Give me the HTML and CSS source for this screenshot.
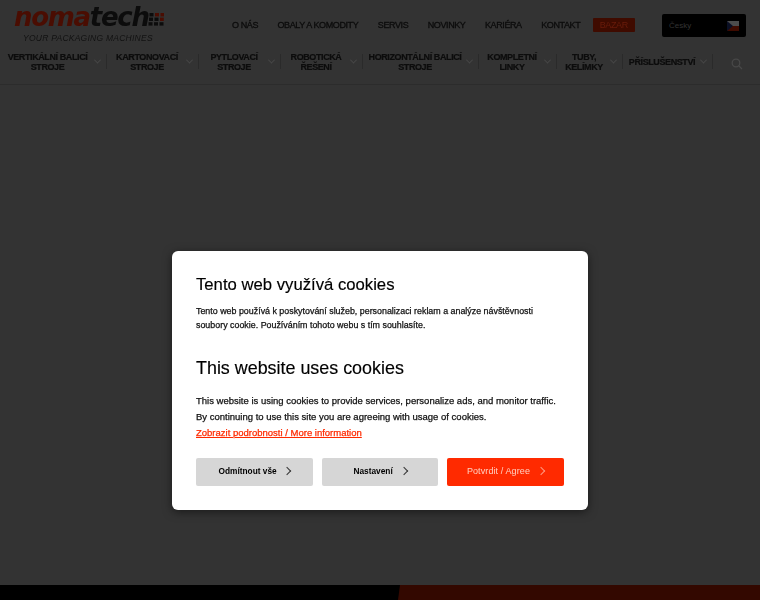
FILE: index.html
```html
<!DOCTYPE html>
<html lang="cs">
<head>
    <meta charset="UTF-8">
    <meta name="viewport" content="width=device-width, initial-scale=1.0">
    <title>Nomatech</title>
    <link rel="stylesheet" href="styles.css">
</head>
<body>
    <div class="page">
        <header class="site-header">
            <div class="top-row">
                <a class="logo" href="#">
                    <span class="logo-name">
                        <span class="logo-red">noma</span>tech
                        <svg class="logo-mark" width="16" height="13" viewBox="0 0 16 13">
                            <g fill="#0c0c0c">
                                <rect x="1.5" y="0" width="4" height="3.4"/>
                                <rect x="1" y="4.6" width="4" height="3.4"/>
                                <rect x="0.5" y="9.2" width="4" height="3.4"/>
                                <rect x="6.5" y="4.6" width="4" height="3.4"/>
                                <rect x="6" y="9.2" width="4" height="3.4"/>
                                <rect x="11.5" y="9.2" width="4" height="3.4"/>
                            </g>
                            <g fill="#4a0d02">
                                <rect x="7" y="0" width="4" height="3.4"/>
                                <rect x="12.5" y="0" width="3.5" height="3.4"/>
                                <rect x="12" y="4.6" width="3.8" height="3.4"/>
                            </g>
                        </svg>
                    </span>
                    <span class="logo-tag">YOUR PACKAGING MACHINES</span>
                </a>
                <nav class="top-nav">
                    <a href="#">O NÁS</a>
                    <a href="#">OBALY A KOMODITY</a>
                    <a href="#">SERVIS</a>
                    <a href="#">NOVINKY</a>
                    <a href="#">KARIÉRA</a>
                    <a href="#">KONTAKT</a>
                    <a class="bazar" href="#">BAZAR</a>
                </nav>
                <div class="lang">
                    <span>Česky</span>
                    <svg width="12" height="10" viewBox="0 0 12 10">
                        <rect width="12" height="5" fill="#4c4c4c"/>
                        <rect y="5" width="12" height="5" fill="#3f0b00"/>
                        <path d="M0 0 L6 5 L0 10 Z" fill="#0a0f24"/>
                    </svg>
                </div>
            </div>
            <nav class="main-nav">
                <a class="nav-item" href="#"><span>VERTIKÁLNÍ BALICÍ<br>STROJE</span><i class="chev"></i></a>
                <a class="nav-item" href="#"><span>KARTONOVACÍ<br>STROJE</span><i class="chev"></i></a>
                <a class="nav-item" href="#"><span>PYTLOVACÍ<br>STROJE</span><i class="chev"></i></a>
                <a class="nav-item" href="#"><span>ROBOTICKÁ<br>ŘEŠENÍ</span><i class="chev"></i></a>
                <a class="nav-item" href="#"><span>HORIZONTÁLNÍ BALICÍ<br>STROJE</span><i class="chev"></i></a>
                <a class="nav-item" href="#"><span>KOMPLETNÍ<br>LINKY</span><i class="chev"></i></a>
                <a class="nav-item" href="#"><span>TUBY,<br>KELÍMKY</span><i class="chev"></i></a>
                <a class="nav-item" href="#"><span>PŘÍSLUŠENSTVÍ</span><i class="chev"></i></a>
                <a class="nav-search" href="#">
                    <svg width="12" height="12" viewBox="0 0 12 12" fill="none" stroke="#484848" stroke-width="1.3">
                        <circle cx="5" cy="5" r="3.8"/>
                        <path d="M8 8 L11 11"/>
                    </svg>
                </a>
            </nav>
        </header>
        <main class="content"></main>
        <footer class="site-footer">
            <div class="footer-right"></div>
        </footer>
    </div>

    <div class="overlay">
        <div class="cookie-box">
            <h2>Tento web využívá cookies</h2>
            <p class="cookie-small">Tento web používá k poskytování služeb, personalizaci reklam a analýze návštěvnosti soubory cookie. Používáním tohoto webu s tím souhlasíte.</p>
            <h2 class="second">This website uses cookies</h2>
            <p class="cookie-text">This website is using cookies to provide services, personalize ads, and monitor traffic. By continuing to use this site you are agreeing with usage of cookies.</p>
            <a class="cookie-link" href="#">Zobrazit podrobnosti / More information</a>
            <div class="cookie-buttons">
                <button class="btn">Odmítnout vše <i class="btn-chev"></i></button>
                <button class="btn">Nastavení <i class="btn-chev"></i></button>
                <button class="btn btn-agree">Potvrdit / Agree <i class="btn-chev"></i></button>
            </div>
        </div>
    </div>
</body>
</html>
```

FILE: styles.css
```css
* {
    box-sizing: border-box;
    margin: 0;
    padding: 0;
}

html, body {
    height: 100%;
    overflow: hidden;
}

body {
    font-family: "Liberation Sans", Arial, sans-serif;
    background-color: #333;
    color: #0c0c0c;
}

a {
    color: inherit;
    text-decoration: none;
}

.page {
    height: 600px;
    display: flex;
    flex-direction: column;
}

/* header sits behind the cookie dialog, already dimmed and soft */
.site-header {
    height: 85px;
    border-bottom: 1px solid #2c2c2c;
    filter: blur(0.6px);
}

.top-row {
    height: 47px;
    position: relative;
    display: flex;
    align-items: flex-start;
    padding-left: 14px;
}

.logo {
    width: 218px;
    display: flex;
    flex-direction: column;
    padding-top: 3px;
}

.logo-name {
    font-family: "DejaVu Sans", sans-serif;
    font-weight: bold;
    font-style: italic;
    font-size: 26px;
    line-height: 29px;
    letter-spacing: -1.3px;
    white-space: nowrap;
}

.logo-red {
    color: #4a0d02;
}

.logo-mark {
    margin-left: -8px;
}

.logo-tag {
    font-size: 8.5px;
    line-height: 10px;
    font-style: italic;
    letter-spacing: 0.25px;
    color: #121212;
    margin-top: 1px;
    padding-left: 9px;
    white-space: nowrap;
}

.top-nav {
    display: flex;
    align-items: center;
    gap: 19.5px;
    height: 14px;
    margin-top: 18px;
    font-size: 9px;
    letter-spacing: -0.4px;
    white-space: nowrap;
    -webkit-text-stroke: 0.3px #0c0c0c;
}

.top-nav .bazar {
    background-color: #3f0b00;
    color: #6a1c0a;
    -webkit-text-stroke: 0;
    padding: 0 7px;
    line-height: 14px;
    margin-left: -7px;
    border-radius: 1px;
}

.lang {
    position: absolute;
    left: 662px;
    top: 14px;
    width: 84px;
    height: 23px;
    background-color: #000;
    border-radius: 2px;
    color: #333;
    font-size: 8px;
    display: flex;
    align-items: center;
    justify-content: space-between;
    padding: 0 7px;
}

.main-nav {
    display: grid;
    grid-template-columns: 107px 92px 82px 82px 116px 78px 66px 90px 1fr;
    height: 37px;
    font-size: 9px;
    font-weight: bold;
    line-height: 10px;
    letter-spacing: -0.4px;
    -webkit-text-stroke: 0.2px #0c0c0c;
}

.nav-item {
    display: flex;
    align-items: center;
    height: 15px;
    margin-top: 7px;
    padding-left: 2px;
    padding-right: 6px;
    border-right: 1px solid #2a2a2a;
}

.nav-item span {
    flex: 1;
    text-align: center;
    white-space: nowrap;
}

.chev {
    width: 5px;
    height: 5px;
    margin-left: 2px;
    border-right: 1px solid #484848;
    border-bottom: 1px solid #484848;
    transform: rotate(45deg) translate(-1px, -1px);
}

.nav-search {
    display: flex;
    justify-content: center;
    padding-top: 11px;
}

.content {
    flex: 1;
}

.site-footer {
    height: 15px;
    background-color: #000;
}

.footer-right {
    height: 100%;
    margin-left: 398px;
    background-color: #330800;
    clip-path: polygon(2px 0, 100% 0, 100% 100%, 0 100%);
}

.overlay {
    position: fixed;
    inset: 0;
    display: flex;
    justify-content: center;
    align-items: flex-start;
    padding-top: 251px;
}

.cookie-box {
    width: 416px;
    height: 259px;
    background-color: #fff;
    border-radius: 6px;
    padding: 23px 24px 22px;
    box-shadow: 0 2px 10px rgba(0, 0, 0, 0.5);
    filter: blur(0.35px);
}

.cookie-box h2 {
    font-size: 16.7px;
    font-weight: normal;
    line-height: 22px;
    color: #000;
    -webkit-text-stroke: 0.15px #000;
}

.cookie-box h2.second {
    font-size: 17.9px;
    margin-top: 25px;
}

.cookie-small {
    font-size: 8.9px;
    line-height: 14px;
    margin-top: 8px;
    color: #111;
    -webkit-text-stroke: 0.25px #111;
}

.cookie-text {
    font-size: 9.5px;
    line-height: 16px;
    margin-top: 14px;
    color: #111;
    -webkit-text-stroke: 0.25px #111;
}

.cookie-link {
    display: block;
    font-size: 9.5px;
    line-height: 16px;
    color: #ff2a00;
    text-decoration: underline;
    -webkit-text-stroke: 0.25px #ff2a00;
}

.cookie-buttons {
    display: grid;
    grid-template-columns: 117px 116px 117px;
    gap: 9px;
    margin-top: 17px;
}

.btn {
    height: 28px;
    padding-bottom: 2px;
    border: none;
    border-radius: 2px;
    background-color: #d6d6d6;
    font-family: inherit;
    font-size: 8.3px;
    font-weight: bold;
    color: #000;
    cursor: pointer;
}

.btn-chev {
    display: inline-block;
    width: 6px;
    height: 6px;
    margin-left: 5.5px;
    margin-bottom: 0.5px;
    border-top: 1px solid #333;
    border-right: 1px solid #333;
    transform: rotate(45deg);
}

.btn-agree {
    background-color: #ff2a00;
    color: #ffd0c0;
    font-size: 9px;
    letter-spacing: 0.1px;
    font-weight: normal;
}

.btn-agree .btn-chev {
    border-color: #ff9a80;
}
```
